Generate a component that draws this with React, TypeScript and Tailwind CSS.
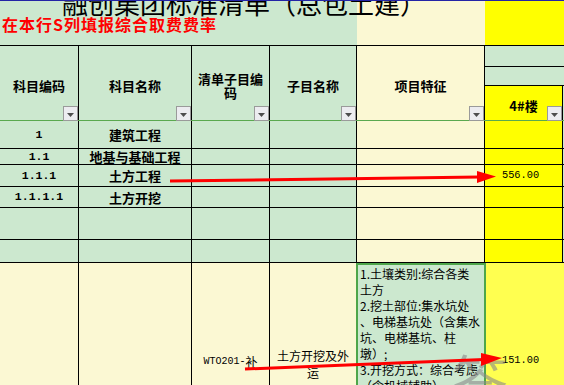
import React from 'react';

const CJK = "font-['Noto_Sans_CJK_SC',sans-serif]";

function Drop() {
  return (
    <span className="absolute right-0 -bottom-px flex h-[15px] w-[15px] items-center justify-center border border-[#9a9a9a] bg-[#ececf0] pt-[2px]">
      <svg width="7" height="4" viewBox="0 0 7 4">
        <path d="M0 0h7L3.5 4z" fill="#4d4d4d" />
      </svg>
    </span>
  );
}

const rows = [
  { h: 'h-[28px]', code: '1', name: '建筑工程' },
  { h: 'h-[16px]', code: '1.1', name: '地基与基础工程' },
  { h: 'h-[22px]', code: '1.1.1', name: '土方工程', val: '556.00' },
  { h: 'h-[21px]', code: '1.1.1.1', name: '土方开挖' },
  { h: 'h-[32px]' },
  { h: 'h-[23px]' },
];

export default function App() {
  return (
    <div className={`relative h-[385px] w-[564px] overflow-hidden bg-white text-black ${CJK}`}>
      {/* title row */}
      <div className="relative flex h-[45px] overflow-hidden border-t border-[#2424a6]">
        <div className="w-[357px] bg-[#cce8cf]" />
        <div className="w-[128px] bg-[#fbf8d3]" />
        <div className="flex-1 bg-[#ffff00]" />
        <div className="absolute left-0 top-0 w-full">
          <div className="-mt-[11px] whitespace-nowrap pl-[62px] text-[26px] leading-[26px]">
            融创集团标准清单（总包土建）
          </div>
          <div className="whitespace-nowrap pl-[2px] text-[16px] font-bold leading-[16px] tracking-[1px] text-[#ff0000]">
            在本行S列填报综合取费费率
          </div>
        </div>
      </div>

      {/* header row */}
      <div className="flex h-[76px] border-y border-t-black border-b-[#5aa94f] text-[13px] font-bold">
        <div className="relative flex w-[79px] items-center justify-center border-r border-black bg-[#cce8cf] pt-[5px]">
          科目编码
          <Drop />
        </div>
        <div className="relative flex w-[113px] items-center justify-center border-r border-black bg-[#cce8cf] pt-[5px]">
          科目名称
          <Drop />
        </div>
        <div className="relative flex w-[78px] items-center justify-center border-r border-black bg-[#cce8cf] px-[1px] pt-[5px] text-center leading-[14px]">
          清单子目编码
          <Drop />
        </div>
        <div className="relative flex w-[87px] items-center justify-center border-r border-black bg-[#cce8cf] pt-[5px]">
          子目名称
          <Drop />
        </div>
        <div className="relative flex w-[128px] items-center justify-center border-r border-black bg-[#fbf8d3] pt-[5px]">
          项目特征
          <Drop />
        </div>
        <div className="flex flex-1 flex-col bg-[#cce8cf]">
          <div className="h-[21px] border-b border-black" />
          <div className="h-[19px] border-b border-black" />
          <div className="flex flex-1">
            <div className="relative flex w-[78px] items-center justify-center border-r border-black bg-[#ffff00] pt-[5px]">
              4#楼
              <Drop />
            </div>
            <div className="flex-1" />
          </div>
        </div>
      </div>

      {/* data rows */}
      {rows.map((r, i) => (
        <div key={i} className={`flex ${r.h} border-b border-black text-[13px] font-bold leading-none`}>
          <div className="flex w-[79px] items-center justify-center border-r border-black bg-[#cce8cf] font-['Liberation_Mono',monospace] text-[11.5px]">
            {r.code}
          </div>
          <div className="flex w-[113px] items-center justify-center whitespace-nowrap border-r border-black bg-[#cce8cf]">
            {r.name}
          </div>
          <div className="w-[78px] border-r border-black bg-[#cce8cf]" />
          <div className="w-[87px] border-r border-black bg-[#cce8cf]" />
          <div className="w-[128px] border-r border-black bg-[#fbf8d3]" />
          <div className="flex w-[78px] items-center border-r border-black bg-[#ffff00] pl-[17px] font-['Liberation_Mono',monospace] text-[10.3px] font-normal">
            {r.val}
          </div>
          <div className="flex-1 bg-[#cce8cf]" />
        </div>
      ))}

      {/* item row */}
      <div className="flex h-[196px] text-[12px]">
        <div className="w-[79px] border-r border-black bg-[#fbf8d3]" />
        <div className="w-[113px] border-r border-black bg-[#fbf8d3]" />
        <div className="flex w-[78px] items-center justify-center whitespace-nowrap border-r border-black bg-[#fbf8d3] pt-[1px]">
          <span className="font-['Liberation_Mono',monospace] text-[10px]">WTO201-</span>
          <span>补</span>
        </div>
        <div className="flex w-[86px] flex-col items-center justify-center whitespace-nowrap bg-[#fbf8d3] pt-[6px] text-center leading-[17px]">
          <div>土方开挖及外</div>
          <div>运</div>
        </div>
        <div className="w-[130px] whitespace-nowrap border-2 border-[#4ea64a] bg-[#cce8cf] pl-[2px] pt-[1px] leading-[16px]">
          <div>1.土壤类别:综合各类</div>
          <div>土方</div>
          <div>2.挖土部位:集水坑处</div>
          <div>、电梯基坑处（含集水</div>
          <div>坑、电梯基坑、柱</div>
          <div>墩）;</div>
          <div>3.开挖方式：综合考虑</div>
          <div>（含机械辅助）</div>
        </div>
        <div className="flex-1 bg-[#ffff50] pl-[16px] pt-[90px] font-['Liberation_Mono',monospace] text-[10.3px]">
          151.00
        </div>
      </div>

      {/* faint watermark glyph */}
      <div className="pointer-events-none absolute left-[452px] top-[350px] text-[56px] leading-none text-[#8a8a8a] opacity-60">
        答
      </div>

      {/* red arrows */}
      <svg className="pointer-events-none absolute left-0 top-0" width="564" height="385">
        <line x1="170" y1="181" x2="480" y2="177" stroke="#ff0000" strokeWidth="3" />
        <polygon points="477,171 496,176.5 477,183" fill="#ff0000" />
        <line x1="245" y1="369" x2="484" y2="359.5" stroke="#ff0000" strokeWidth="3" />
        <polygon points="481,353 502,358 481,366" fill="#ff0000" />
      </svg>
    </div>
  );
}
